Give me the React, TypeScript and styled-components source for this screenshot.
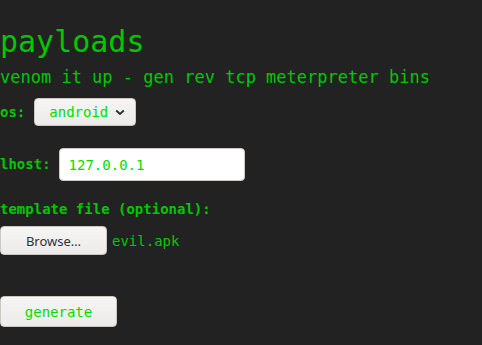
import React from "react";
import styled, { createGlobalStyle } from "styled-components";

const Global = createGlobalStyle`
  html, body { margin: 0; padding: 0; background: #222222; }
  body { font-family: "DejaVu Sans Mono", monospace; color: #00c800; }
`;

const Page = styled.div`
  display: flex;
  flex-direction: column;
  align-items: flex-start;
  padding-top: 25px;
  min-height: 345px;
  box-sizing: border-box;
`;

const Title = styled.h1`
  margin: 0;
  font-size: 30px;
  line-height: 34px;
  font-weight: normal;
`;

const Subtitle = styled.p`
  margin: 8px 0 0;
  font-size: 17px;
  line-height: 20px;
`;

const Row = styled.div<{ $top: number }>`
  display: flex;
  align-items: center;
  margin-top: ${(p) => p.$top}px;
`;

const Label = styled.label<{ $gap?: number }>`
  font-weight: bold;
  font-size: 14px;
  line-height: 17px;
  margin-right: ${(p) => p.$gap ?? 0}px;
`;

const BlockLabel = styled(Label)`
  display: block;
  margin-top: 20px;
`;

const buttonSkin = `
  box-sizing: border-box;
  border: 1px solid #cdc7c2;
  border-radius: 4px;
  background: linear-gradient(#f6f5f4, #edebe9);
  box-shadow: 0 1px 0 rgba(0,0,0,0.08);
`;

const Select = styled.div`
  ${buttonSkin}
  width: 102px;
  height: 28px;
  display: flex;
  align-items: center;
  padding-left: 14px;
  gap: 7px;
  font-size: 14px;
  color: #00dd00;
`;

const Chevron = styled.svg`
  width: 10px;
  height: 7px;
`;

const Input = styled.div`
  box-sizing: border-box;
  width: 186px;
  height: 33px;
  background: #ffffff;
  border: 1px solid #cdc7c2;
  border-radius: 4px;
  display: flex;
  align-items: center;
  padding-left: 9px;
  font-size: 14px;
  color: #00dd00;
`;

const BrowseButton = styled.div`
  ${buttonSkin}
  width: 107px;
  height: 29px;
  display: flex;
  align-items: center;
  justify-content: center;
  font-family: "Noto Sans", sans-serif;
  font-size: 13px;
  color: #2e3436;
`;

const FileName = styled.span`
  margin-left: 5px;
  font-size: 14px;
`;

const Generate = styled.div`
  ${buttonSkin}
  margin-top: 41px;
  width: 117px;
  height: 31px;
  display: flex;
  align-items: center;
  justify-content: center;
  font-size: 14px;
  color: #00dd00;
`;

export default function App() {
  return (
    <>
      <Global />
      <Page>
        <Title>payloads</Title>
        <Subtitle>venom it up - gen rev tcp meterpreter bins</Subtitle>
        <Row $top={11}>
          <Label $gap={9}>os:</Label>
          <Select>
            android
            <Chevron viewBox="0 0 10 7">
              <path d="M1.2 1.5 L5 5 L8.8 1.5" fill="none" stroke="#2e3436" strokeWidth="2" />
            </Chevron>
          </Select>
        </Row>
        <Row $top={22}>
          <Label $gap={8}>lhost:</Label>
          <Input>127.0.0.1</Input>
        </Row>
        <BlockLabel>template file (optional):</BlockLabel>
        <Row $top={8}>
          <BrowseButton>Browse…</BrowseButton>
          <FileName>evil.apk</FileName>
        </Row>
        <Generate>generate</Generate>
      </Page>
    </>
  );
}
